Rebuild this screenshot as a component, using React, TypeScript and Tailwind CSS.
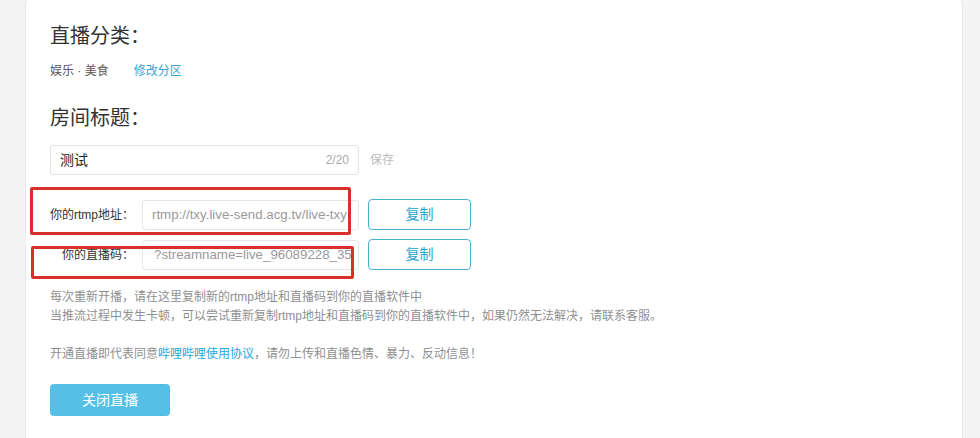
import React from "react";

const font = { fontFamily: '"Liberation Sans", "Noto Sans CJK SC", sans-serif' };

export default function App() {
  return (
    <div
      className="relative h-[438px] w-[980px] overflow-hidden bg-[#f4f4f5] flex items-start pl-[25px] pr-[17px]"
      style={font}
    >
      <div className="flex-1 h-[470px] bg-white border border-[#e8e8e8] rounded-[6px] -mt-[2px] pt-[23px] px-[24px] flex flex-col">
        <div className="text-[20px] leading-[28px] text-[#333]">直播分类：</div>
        <div className="mt-[11px] flex items-center h-[20px] text-[12px] text-[#555]">
          <span>娱乐 · 美食</span>
          <span className="ml-[25px] text-[#3aa3cf] cursor-pointer">修改分区</span>
        </div>
        <div className="mt-[23px] text-[20px] leading-[28px] text-[#333]">房间标题：</div>
        <div className="mt-[13px] flex items-center">
          <div className="w-[309px] h-[30px] border border-[#e3e3e3] rounded-[3px] flex items-center px-[9px]">
            <span className="text-[14px] text-[#222] flex-1">测试</span>
            <span className="text-[12px] text-[#aaa]">2/20</span>
          </div>
          <span className="ml-[11px] text-[12px] text-[#bbb]">保存</span>
        </div>

        <div className="mt-[24px] flex items-center h-[31px]">
          <div className="w-[84px] text-right text-[12px] text-[#333]">你的rtmp地址：</div>
          <div className="ml-[8px] w-[217px] h-[30px] border border-[#e6e6e6] rounded-[3px] flex items-center pl-[9px] overflow-hidden whitespace-nowrap text-[13.3px] text-[#9a9a9a]">
            rtmp://txy.live-send.acg.tv/live-txy
          </div>
          <button className="ml-[9px] w-[103px] h-[31px] border border-[#45b3d0] rounded-[4px] text-[14px] text-[#2ea3cc] bg-white">
            复制
          </button>
        </div>
        <div className="mt-[9px] flex items-center h-[31px]">
          <div className="w-[84px] text-right text-[12px] text-[#333]">你的直播码：</div>
          <div className="ml-[8px] w-[217px] h-[30px] border border-[#e6e6e6] rounded-[3px] flex items-center pl-[11px] overflow-hidden whitespace-nowrap text-[13.3px] text-[#9a9a9a]">
            ?streamname=live_96089228_35
          </div>
          <button className="ml-[9px] w-[103px] h-[31px] border border-[#45b3d0] rounded-[4px] text-[14px] text-[#2ea3cc] bg-white">
            复制
          </button>
        </div>

        <div className="mt-[18px] text-[12px] leading-[19px] text-[#8f8f8f]">
          <div>每次重新开播，请在这里复制新的rtmp地址和直播码到你的直播软件中</div>
          <div>当推流过程中发生卡顿，可以尝试重新复制rtmp地址和直播码到你的直播软件中，如果仍然无法解决，请联系客服。</div>
          <div className="h-[19px]"></div>
          <div>
            开通直播即代表同意<span className="text-[#23a8e0]">哔哩哔哩使用协议</span>，请勿上传和直播色情、暴力、反动信息！
          </div>
        </div>

        <button className="mt-[20px] w-[120px] h-[32px] rounded-[4px] bg-[#56bfe6] text-white text-[14px]">
          关闭直播
        </button>
      </div>

      <div className="absolute left-[30px] top-[187px] w-[321px] h-[48px] border-[3px] border-[#d9302b] rounded-[2px] pointer-events-none"></div>
      <div className="absolute left-[31px] top-[246px] w-[323px] h-[33px] border-[3px] border-[#d9302b] rounded-[2px] pointer-events-none"></div>
    </div>
  );
}
